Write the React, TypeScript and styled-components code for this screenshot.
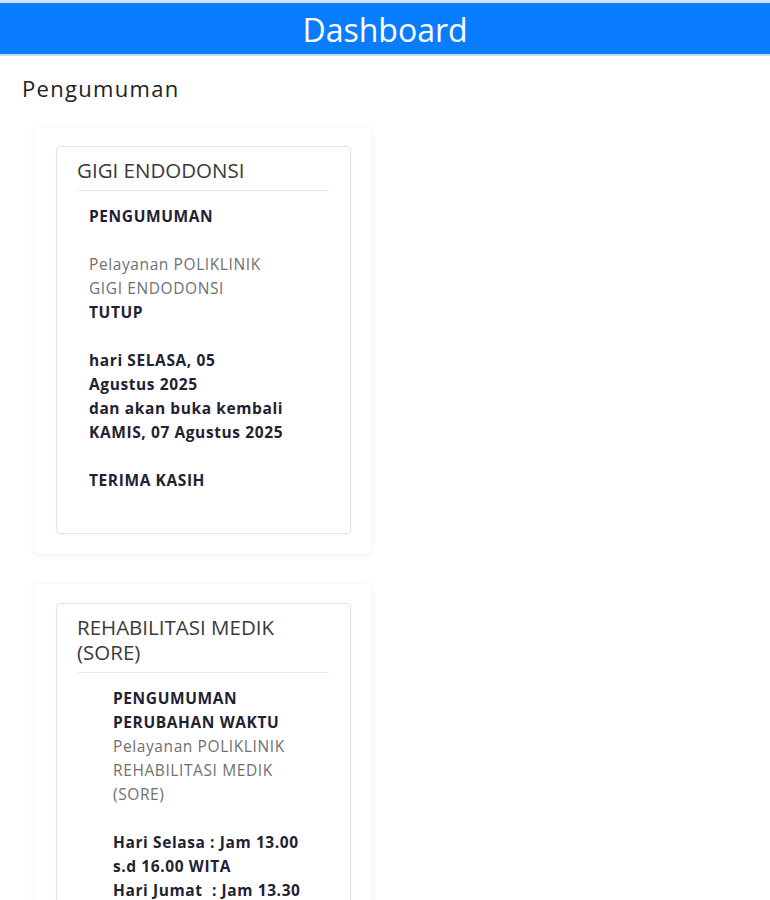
import React from "react";
import styled, { createGlobalStyle } from "styled-components";

const GlobalStyle = createGlobalStyle`
  html, body {
    margin: 0;
    padding: 0;
    background: #ffffff;
    font-family: "Open Sans", "Liberation Sans", sans-serif;
  }
  * { box-sizing: border-box; }
`;

const Page = styled.div`
  border-top: 3px solid #d3dfec;
  min-height: 900px;
`;

const Header = styled.header`
  height: 53px;
  background: #0a7dff;
  border-bottom: 2px solid #c7d9ee;
  display: flex;
  align-items: center;
  justify-content: center;
`;

const HeaderTitle = styled.h1`
  margin: 0;
  color: #ffffff;
  font-size: 32px;
  font-weight: 400;
  line-height: 1;
  padding-top: 2px;
`;

const Main = styled.main`
  padding: 19px 22px 0 22px;
`;

const SectionTitle = styled.h2`
  margin: 0 0 26px 0;
  font-size: 22px;
  letter-spacing: 1.3px;
  font-weight: 400;
  line-height: 26px;
  color: #222222;
`;

const CardList = styled.div`
  display: flex;
  flex-direction: column;
  gap: 30px;
  padding-left: 13px;
`;

const OuterCard = styled.section`
  width: 336px;
  padding: 19px 20px 20px 21px;
  background: #ffffff;
  border-radius: 3px;
  box-shadow: 0 1px 6px rgba(0, 0, 0, 0.07);
`;

const InnerCard = styled.article`
  border: 1px solid #e4e4e4;
  border-radius: 4px;
  padding: 11px 21px 41px 20px;
  box-shadow: 0 1px 2px rgba(0, 0, 0, 0.04);
`;

const CardTitle = styled.h3`
  margin: 0;
  font-size: 20.5px;
  font-weight: 400;
  line-height: 25px;
  color: #3a3a3a;
  padding-bottom: 7px;
  border-bottom: 1px solid #ececec;
`;

const Body = styled.div<{ $indent: number }>`
  padding-left: ${(p) => p.$indent}px;
  padding-top: 13px;
  font-size: 15.5px;
  letter-spacing: 0.6px;
  line-height: 24px;
`;

const Line = styled.div<{ $strong?: boolean }>`
  min-height: 24px;
  color: ${(p) => (p.$strong ? "#1f2233" : "#707070")};
  font-weight: ${(p) => (p.$strong ? 700 : 400)};
  white-space: pre;
`;

type L = { t: string; b?: boolean };

const cards: { title: string[]; indent: number; lines: L[] }[] = [
  {
    title: ["GIGI ENDODONSI"],
    indent: 12,
    lines: [
      { t: "PENGUMUMAN", b: true },
      { t: "" },
      { t: "Pelayanan POLIKLINIK" },
      { t: "GIGI ENDODONSI" },
      { t: "TUTUP", b: true },
      { t: "" },
      { t: "hari SELASA, 05", b: true },
      { t: "Agustus 2025", b: true },
      { t: "dan akan buka kembali", b: true },
      { t: "KAMIS, 07 Agustus 2025", b: true },
      { t: "" },
      { t: "TERIMA KASIH", b: true },
    ],
  },
  {
    title: ["REHABILITASI MEDIK", "(SORE)"],
    indent: 36,
    lines: [
      { t: "PENGUMUMAN", b: true },
      { t: "PERUBAHAN WAKTU", b: true },
      { t: "Pelayanan POLIKLINIK" },
      { t: "REHABILITASI MEDIK" },
      { t: "(SORE)" },
      { t: "" },
      { t: "Hari Selasa : Jam 13.00", b: true },
      { t: "s.d 16.00 WITA", b: true },
      { t: "Hari Jumat  : Jam 13.30", b: true },
      { t: "s.d 16.00 WITA", b: true },
      { t: "" },
      { t: "TERIMA KASIH", b: true },
    ],
  },
];

export default function App() {
  return (
    <>
      <GlobalStyle />
      <Page>
        <Header>
          <HeaderTitle>Dashboard</HeaderTitle>
        </Header>
        <Main>
          <SectionTitle>Pengumuman</SectionTitle>
          <CardList>
            {cards.map((c, i) => (
              <OuterCard key={i}>
                <InnerCard>
                  <CardTitle>
                    {c.title.map((t, j) => (
                      <React.Fragment key={j}>
                        {j > 0 && <br />}
                        {t}
                      </React.Fragment>
                    ))}
                  </CardTitle>
                  <Body $indent={c.indent}>
                    {c.lines.map((l, j) => (
                      <Line key={j} $strong={l.b}>
                        {l.t}
                      </Line>
                    ))}
                  </Body>
                </InnerCard>
              </OuterCard>
            ))}
          </CardList>
        </Main>
      </Page>
    </>
  );
}
